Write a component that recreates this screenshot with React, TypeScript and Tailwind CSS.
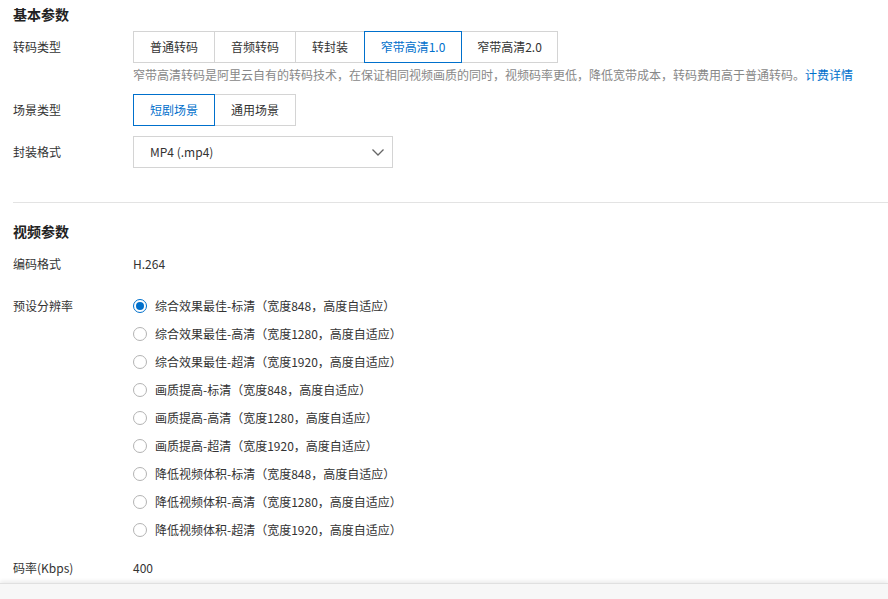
import React from "react";

const font = { fontFamily: '"Noto Sans CJK SC", "Microsoft YaHei", sans-serif' };

function Seg({ items, widths, selected }: { items: string[]; widths: number[]; selected: number }) {
  return (
    <div className="flex">
      {items.map((t, i) => (
        <div
          key={t}
          style={{ width: widths[i] }}
          className={
            "h-[32px] flex items-center justify-center border text-[12px] bg-white " +
            (i > 0 ? "-ml-px " : "") +
            (i === selected ? "border-[#0070cc] text-[#0070cc] relative z-10" : "border-[#d4d4d4] text-[#333]")
          }
        >
          {t}
        </div>
      ))}
    </div>
  );
}

const radios = [
  "综合效果最佳-标清（宽度848，高度自适应）",
  "综合效果最佳-高清（宽度1280，高度自适应）",
  "综合效果最佳-超清（宽度1920，高度自适应）",
  "画质提高-标清（宽度848，高度自适应）",
  "画质提高-高清（宽度1280，高度自适应）",
  "画质提高-超清（宽度1920，高度自适应）",
  "降低视频体积-标清（宽度848，高度自适应）",
  "降低视频体积-高清（宽度1280，高度自适应）",
  "降低视频体积-超清（宽度1920，高度自适应）",
];

export default function App() {
  return (
    <div style={font} className="w-[888px] h-[599px] bg-white overflow-hidden flex flex-col text-[#333]">
      <div className="flex-1 pl-[13px]">
        <div className="pt-[4px] h-[24px] leading-[20px] text-[14px] font-bold text-[#222]">基本参数</div>
        <div className="flex items-center mt-[7px]">
          <div className="w-[120px] text-[12px]">转码类型</div>
          <Seg
            items={["普通转码", "音频转码", "转封装", "窄带高清1.0", "窄带高清2.0"]}
            widths={[82, 82, 70, 98, 97]}
            selected={3}
          />
        </div>
        <div className="ml-[120px] mt-[3px] h-[18px] leading-[18px] text-[12px] text-[#888] whitespace-nowrap">
          窄带高清转码是阿里云自有的转码技术，在保证相同视频画质的同时，视频码率更低，降低宽带成本，转码费用高于普通转码。
          <span className="text-[#0070cc]">计费详情</span>
        </div>
        <div className="flex items-center mt-[10px]">
          <div className="w-[120px] text-[12px]">场景类型</div>
          <Seg items={["短剧场景", "通用场景"]} widths={[82, 82]} selected={0} />
        </div>
        <div className="flex items-center mt-[10px]">
          <div className="w-[120px] text-[12px]">封装格式</div>
          <div className="w-[260px] h-[32px] border border-[#d4d4d4] flex items-center justify-between pl-[16px] pr-[7px] text-[12px]">
            <span>MP4 (.mp4)</span>
            <svg width="14" height="14" viewBox="0 0 14 14" fill="none">
              <path d="M1.5 4.5 L7 10 L12.5 4.5" stroke="#666" strokeWidth="1.3" />
            </svg>
          </div>
        </div>
        <div className="mt-[34px] h-px bg-[#e3e3e3]" />
        <div className="mt-[18px] h-[20px] leading-[20px] text-[14px] font-bold text-[#222]">视频参数</div>
        <div className="flex items-center mt-[13px] h-[20px] text-[12px]">
          <div className="w-[120px]">编码格式</div>
          <div>H.264</div>
        </div>
        <div className="flex mt-[18px] text-[12px]">
          <div className="w-[120px] h-[28px] flex items-center">预设分辨率</div>
          <div className="flex flex-col">
            {radios.map((r, i) => (
              <div key={r} className="h-[28px] flex items-center">
                {i === 0 ? (
                  <span className="w-[14px] h-[14px] rounded-full border border-[#0070cc] flex items-center justify-center">
                    <span className="w-[8px] h-[8px] rounded-full bg-[#0070cc]" />
                  </span>
                ) : (
                  <span className="w-[14px] h-[14px] rounded-full border border-[#b3b3b3] bg-white" />
                )}
                <span className="ml-[8px]">{r}</span>
              </div>
            ))}
          </div>
        </div>
        <div className="flex items-center mt-[14px] h-[20px] text-[12px]">
          <div className="w-[120px]">码率(Kbps)</div>
          <div>400</div>
        </div>
      </div>
      <div className="h-[16px] bg-[#f7f7f7] border-t border-[#e0e0e0] shadow-[0_-2px_4px_rgba(0,0,0,0.08)]" />
    </div>
  );
}
